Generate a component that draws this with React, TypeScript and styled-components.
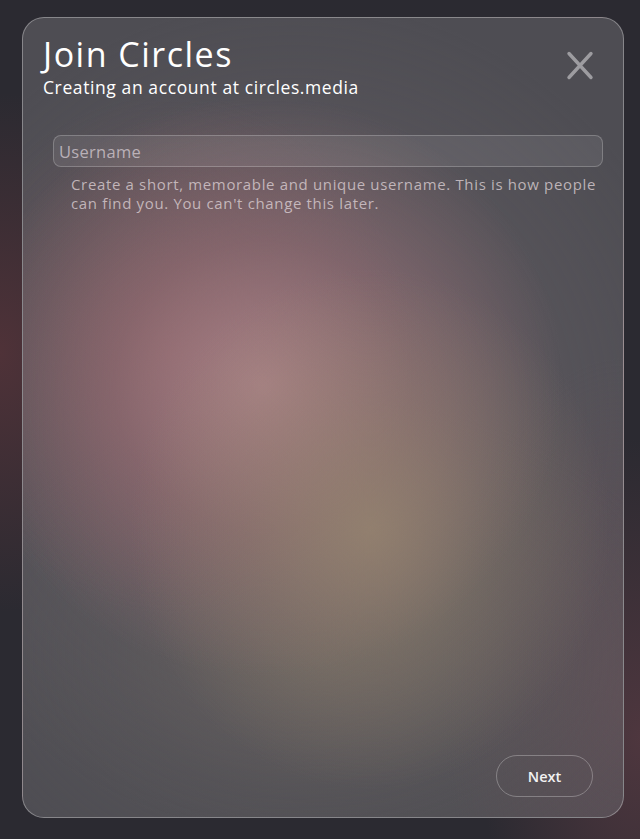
import React from "react";
import styled, { createGlobalStyle } from "styled-components";

const Global = createGlobalStyle`
  html, body { margin: 0; padding: 0; height: 100%; }
  body {
    font-family: "Open Sans", Lato, sans-serif;
    background: #2b2a31;
  }
  #root { height: 100%; }
`;

const Page = styled.div`
  box-sizing: border-box;
  height: 100vh;
  padding: 17px 16px 21px 22px;
  display: flex;
  background:
    radial-gradient(180px 260px at 0% 42%, rgba(88, 52, 58, 0.8), transparent),
    radial-gradient(160px 300px at 100% 88%, rgba(82, 56, 64, 0.9), transparent),
    #2b2a31;
`;

const Card = styled.div`
  box-sizing: border-box;
  flex: 1;
  display: flex;
  flex-direction: column;
  border-radius: 22px;
  border: 1px solid rgba(255, 255, 255, 0.32);
  padding: 16px 20px 20px 20px;
  background:
    radial-gradient(240px 260px at 58% 64%, rgba(152, 134, 112, 0.8) 0%, rgba(152, 134, 112, 0.35) 50%, transparent 100%),
    radial-gradient(300px 290px at 40% 46%, rgba(170, 130, 135, 0.95) 0%, rgba(160, 115, 122, 0.5) 50%, transparent 100%),
    radial-gradient(240px 260px at 25% 42%, rgba(140, 90, 95, 0.55) 0%, rgba(130, 85, 90, 0.25) 55%, transparent 100%),
    radial-gradient(380px 260px at 50% 80%, rgba(112, 104, 98, 0.6) 0%, rgba(100, 96, 94, 0.25) 55%, transparent 100%),
    radial-gradient(180px 340px at 100% 85%, rgba(100, 80, 88, 0.7), transparent),
    radial-gradient(420px 420px at 45% 50%, rgba(120, 110, 115, 0.5), transparent),
    #4e4d53;
`;

const Header = styled.div`
  display: flex;
  justify-content: space-between;
  align-items: flex-start;
`;

const TitleBlock = styled.div`
  display: flex;
  flex-direction: column;
`;

const Title = styled.h1`
  margin: 0;
  font-size: 34px;
  font-weight: 400;
  line-height: 40px;
  color: #ffffff;
  letter-spacing: 1.5px;
`;

const Subtitle = styled.div`
  margin-top: 3px;
  font-size: 17.5px;
  line-height: 20px;
  color: #ffffff;
  letter-spacing: 0.6px;
`;

const CloseButton = styled.button`
  background: none;
  border: none;
  padding: 0;
  margin: 17px 9px 0 0;
  width: 28px;
  height: 29px;
  display: flex;
  align-items: center;
  justify-content: center;
  cursor: pointer;
`;

const Form = styled.div`
  margin: 38px 0 0 10px;
  display: flex;
  flex-direction: column;
`;

const Input = styled.input`
  box-sizing: border-box;
  height: 32px;
  width: 100%;
  border-radius: 8px;
  border: 1px solid rgba(255, 255, 255, 0.22);
  background: rgba(255, 255, 255, 0.08);
  padding: 0 5px;
  font-family: inherit;
  font-size: 16.5px;
  letter-spacing: 0.3px;
  color: #fff;
  outline: none;
  &::placeholder {
    color: rgba(215, 205, 212, 0.75);
  }
`;

const Help = styled.p`
  margin: 8px 0 0 18px;
  font-size: 15px;
  line-height: 19px;
  letter-spacing: 0.65px;
  color: rgba(220, 208, 212, 0.78);
`;

const Spacer = styled.div`
  flex: 1;
`;

const Footer = styled.div`
  display: flex;
  justify-content: flex-end;
  padding-right: 10px;
`;

const NextButton = styled.button`
  width: 97px;
  height: 42px;
  border-radius: 21px;
  border: 1px solid rgba(255, 255, 255, 0.28);
  background: transparent;
  color: #f2f2f2;
  font-family: inherit;
  font-size: 14.5px;
  font-weight: 600;
  cursor: pointer;
`;

export default function App() {
  return (
    <>
      <Global />
      <Page>
        <Card>
          <Header>
            <TitleBlock>
              <Title>Join Circles</Title>
              <Subtitle>Creating an account at circles.media</Subtitle>
            </TitleBlock>
            <CloseButton aria-label="Close">
              <svg width="28" height="29" viewBox="0 0 28 29">
                <path
                  d="M3 2.5 L25 26.5 M25 2.5 L3 26.5"
                  stroke="#9d9ca0"
                  strokeWidth="3.4"
                  strokeLinecap="round"
                  fill="none"
                />
              </svg>
            </CloseButton>
          </Header>
          <Form>
            <Input placeholder="Username" />
            <Help>
              Create a short, memorable and unique username. This is how people
              can find you. You can't change this later.
            </Help>
          </Form>
          <Spacer />
          <Footer>
            <NextButton>Next</NextButton>
          </Footer>
        </Card>
      </Page>
    </>
  );
}
